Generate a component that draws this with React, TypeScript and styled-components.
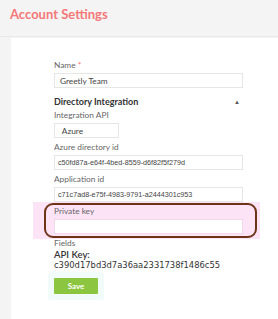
import React from 'react';
import styled, { createGlobalStyle } from 'styled-components';

const GlobalStyle = createGlobalStyle`
  html, body {
    margin: 0;
    padding: 0;
    background: #f4f4f4;
  }
  * { box-sizing: border-box; }
`;

const Page = styled.div`
  width: 278px;
  height: 319px;
  overflow: hidden;
  background: #f4f4f4;
  font-family: Lato, "Liberation Sans", sans-serif;
`;

const Header = styled.div`
  height: 37px;
  padding: 6px 0 0 10px;
  border-bottom: 1px solid #e8e8e8;
`;

const Title = styled.h1`
  margin: 0;
  font-size: 13px;
  font-weight: 700;
  color: #f37878;
`;

const Card = styled.div`
  margin: 1px 0 0 11px;
  height: 290px;
  background: #fff;
  padding: 21px 0 0 43px;
`;

const Form = styled.div`
  width: 189px;
  display: flex;
  flex-direction: column;
`;

const Label = styled.div<{ $tight?: boolean }>`
  font-size: 8.3px;
  color: #666;
  line-height: 12px;
  margin-bottom: ${({ $tight }) => ($tight ? '0' : '2px')};
`;

const Star = styled.span`
  color: #f07070;
`;

const Input = styled.div<{ $w?: number; $tint?: boolean; $code?: boolean }>`
  width: ${({ $w }) => ($w ? `${$w}px` : '100%')};
  height: 15px;
  border: 1px solid ${({ $tint }) => ($tint ? '#f3d8ec' : '#e6e6e6')};
  background: #fff;
  font-family: ${({ $code }) => ($code ? '"Liberation Sans", Arial, sans-serif' : 'Lato, sans-serif')};
  font-size: ${({ $code }) => ($code ? '7.2px' : '8.3px')};
  color: #444;
  display: flex;
  align-items: center;
  padding-left: ${({ $code }) => ($code ? '3px' : '5px')};
  margin-bottom: 3px;
  white-space: nowrap;
  overflow: hidden;
`;

const SectionRow = styled.div`
  display: flex;
  justify-content: space-between;
  align-items: center;
  height: 12px;
  margin: 4px 0 2px;
`;

const SectionTitle = styled.div`
  font-size: 9px;
  font-weight: 700;
  color: #333;
`;

const Caret = styled.span`
  font-size: 6px;
  color: #555;
  margin-right: 3px;
`;

const Highlight = styled.div`
  position: relative;
  &::before {
    content: '';
    position: absolute;
    left: -21px;
    right: -17px;
    top: -3px;
    bottom: -2px;
    background: #fce3f6;
  }
  &::after {
    content: '';
    position: absolute;
    left: -10px;
    right: -14px;
    top: -2px;
    bottom: -1px;
    border: 2px solid #6e3417;
    border-radius: 9px;
  }
  & > * { position: relative; z-index: 1; }
`;

const KeyTitle = styled.div`
  font-size: 9.5px;
  color: #333;
  font-weight: 600;
  line-height: 11px;
`;

const KeyValue = styled.div`
  font-family: "DejaVu Sans", sans-serif;
  font-size: 8.4px;
  color: #333;
  line-height: 10px;
  margin-bottom: 3px;
`;

const Save = styled.button`
  width: 44px;
  height: 16px;
  border: none;
  border-radius: 1px;
  background: #8cc540;
  color: #fff;
  font-family: Lato, sans-serif;
  font-weight: 700;
  font-size: 8px;
  padding: 0;
  box-shadow: 0 0 0 6px #f1fbf9;
`;

export default function App() {
  return (
    <Page>
      <GlobalStyle />
      <Header>
        <Title>Account Settings</Title>
      </Header>
      <Card>
        <Form>
          <Label>
            Name <Star>*</Star>
          </Label>
          <Input>Greetly Team</Input>
          <SectionRow>
            <SectionTitle>Directory Integration</SectionTitle>
            <Caret>▲</Caret>
          </SectionRow>
          <Label>Integration API</Label>
          <Input $w={65}>&nbsp;Azure</Input>
          <Label>Azure directory id</Label>
          <Input $code>c50fd87a-e64f-4bed-8559-d6f82f5f279d</Input>
          <Label>Application id</Label>
          <Input $code>c71c7ad8-e75f-4983-9791-a2444301c953</Input>
          <Highlight>
            <Label>Private key</Label>
            <Input $tint />
          </Highlight>
          <Label $tight>Fields</Label>
          <KeyTitle>API Key:</KeyTitle>
          <KeyValue>c390d17bd3d7a36aa2331738f1486c55</KeyValue>
          <div>
            <Save>Save</Save>
          </div>
        </Form>
      </Card>
    </Page>
  );
}
